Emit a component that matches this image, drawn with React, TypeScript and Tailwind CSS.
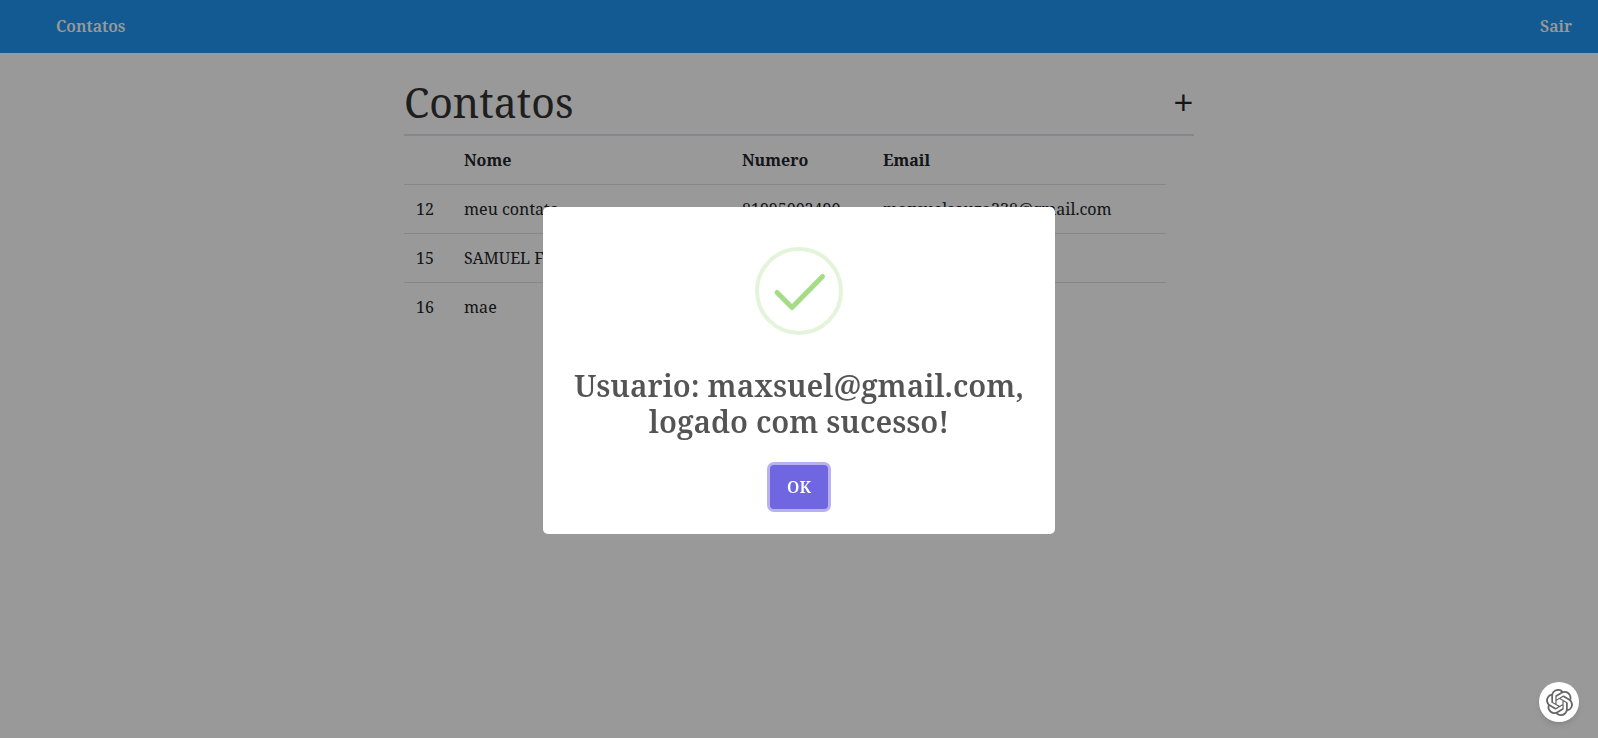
import { SiOpenai } from "react-icons/si";

type Contact = { id: number; name: string; phone: string; email: string };

const contacts: Contact[] = [
  { id: 12, name: "meu contato", phone: "81995002490", email: "maxsuelsouza338@gmail.com" },
  { id: 15, name: "SAMUEL F", phone: "", email: "" },
  { id: 16, name: "mae", phone: "", email: "" },
];

export default function App() {
  return (
    <div className="min-h-screen bg-white font-['Noto_Serif','DejaVu_Serif',serif] text-base text-[#212529]">
      <nav className="flex h-[53px] items-center justify-between bg-[#2196f3] pr-[26px] pb-0.5 pl-14 font-semibold text-white">
        <a href="#contatos">Contatos</a>
        <a href="#sair">Sair</a>
      </nav>

      <main className="mx-auto max-w-[790px] pt-5">
        <header className="flex h-[63px] items-center justify-between border-b-2 border-[#dee2e6] pb-1">
          <h1 className="text-[41px] leading-[48px] text-[#333]">Contatos</h1>
          <button type="button" aria-label="Adicionar contato" className="text-[38px] leading-10">
            +
          </button>
        </header>
        <div className="pr-7">
          <table className="w-full table-fixed text-left">
            <colgroup>
              <col className="w-12" />
              <col className="w-[278px]" />
              <col className="w-[141px]" />
              <col />
            </colgroup>
            <thead>
              <tr className="h-12 border-b border-[#dee2e6]">
                <th className="px-3" />
                <th className="px-3">Nome</th>
                <th className="px-3">Numero</th>
                <th className="px-3">Email</th>
              </tr>
            </thead>
            <tbody>
              {contacts.map((c) => (
                <tr key={c.id} className="h-[49px] border-b border-[#dee2e6] last:border-b-0">
                  <td className="px-3">{c.id}</td>
                  <td className="px-3">{c.name}</td>
                  <td className="px-3">{c.phone}</td>
                  <td className="px-3">{c.email}</td>
                </tr>
              ))}
            </tbody>
          </table>
        </div>
      </main>

      <div className="fixed inset-0 flex items-center justify-center bg-black/40 pt-[3px]">
        <div role="dialog" aria-modal="true" aria-labelledby="dialog-title" className="flex w-lg flex-col items-center rounded-[5px] bg-white pt-10 pb-[25px]">
          <svg viewBox="0 0 88 88" className="size-[88px]" fill="none" aria-hidden="true">
            <circle cx="44" cy="44" r="42" stroke="#a5dc86" strokeOpacity="0.3" strokeWidth="4" />
            <path d="M22 45.500L37 60.500L67.500 29.500" stroke="#a5dc86" strokeWidth="5" strokeLinecap="round" strokeLinejoin="round" />
          </svg>
          <h2 id="dialog-title" className="mt-[33px] px-[30px] text-center text-[30px] leading-9 font-semibold text-[#545454]">
            Usuario: maxsuel@gmail.com, logado com sucesso!
          </h2>
          <button type="button" className="mt-[25px] h-11 rounded-[4px] bg-[#7066e0] px-[17px] font-semibold text-white ring-3 ring-[#7066e0]/50">
            OK
          </button>
        </div>
      </div>

      <button type="button" aria-label="Assistente" className="fixed right-[19px] bottom-4 flex size-10 items-center justify-center rounded-full bg-white text-[#666] shadow-md">
        <SiOpenai className="size-[27px]" />
      </button>
    </div>
  );
}
